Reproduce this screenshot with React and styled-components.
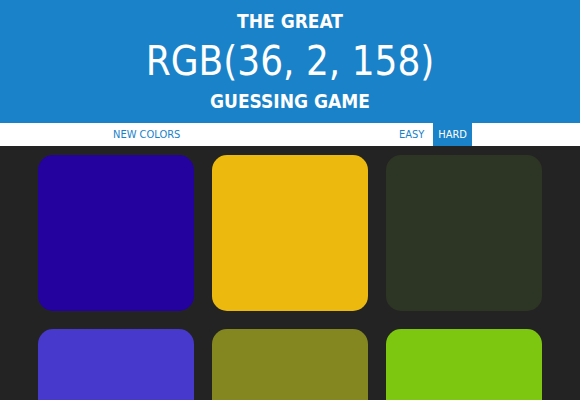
import React from "react";
import styled, { createGlobalStyle } from "styled-components";

const GlobalStyle = createGlobalStyle`
  body {
    margin: 0;
    background: #232323;
    font-family: "DejaVu Sans Condensed", "Liberation Sans Narrow", "Liberation Sans", sans-serif;
  }
`;

const Header = styled.header`
  background: #1a82c8;
  color: white;
  text-align: center;
  text-transform: uppercase;
  padding: 8px 0 9px;
  height: 123px;
  box-sizing: border-box;
`;

const Small = styled.div`
  font-size: 19px;
  font-weight: bold;
  line-height: 26px;
`;

const Big = styled.div`
  font-size: 40px;
  line-height: 54px;
`;

const Stripe = styled.div`
  background: white;
  height: 23px;
  display: flex;
  align-items: stretch;
  justify-content: space-between;
  padding: 0 108px 0 108px;
`;

const Group = styled.div`
  display: flex;
  align-items: stretch;
  gap: 4px;
`;

const Btn = styled.button`
  border: none;
  background: ${({ $active }) => ($active ? "#1a82c8" : "white")};
  color: ${({ $active }) => ($active ? "white" : "#1a82c8")};
  font-family: inherit;
  font-size: 11px;
  text-transform: uppercase;
  padding: 0 5px;
  height: 100%;
  cursor: pointer;
`;

const Grid = styled.div`
  width: 504px;
  margin: 9px auto 0;
  display: grid;
  grid-template-columns: repeat(3, 156px);
  gap: 18px;
`;

const Square = styled.div`
  height: 156px;
  border-radius: 15px;
  background: ${({ $color }) => $color};
`;

const colors = [
  "rgb(36, 2, 158)",
  "#ecb90e",
  "#2d3625",
  "#4639cb",
  "#848620",
  "#7ec711",
];

export default function App() {
  return (
    <>
      <GlobalStyle />
      <Header>
        <Small>The Great</Small>
        <Big>RGB(36, 2, 158)</Big>
        <Small>Guessing Game</Small>
      </Header>
      <Stripe>
        <Group>
          <Btn>New Colors</Btn>
        </Group>
        <Group>
          <Btn>Easy</Btn>
          <Btn $active>Hard</Btn>
        </Group>
      </Stripe>
      <Grid>
        {colors.map((c, i) => (
          <Square key={i} $color={c} />
        ))}
      </Grid>
    </>
  );
}
